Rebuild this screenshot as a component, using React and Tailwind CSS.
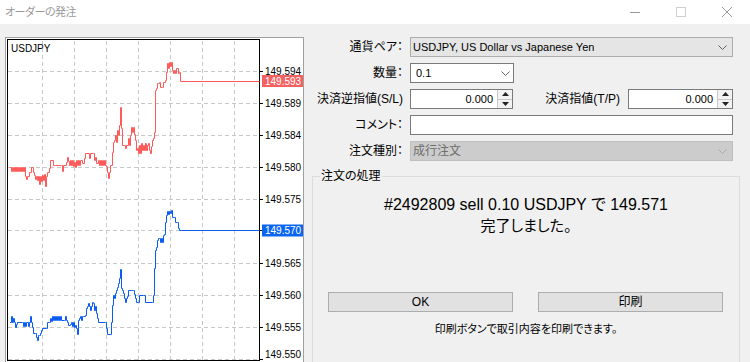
import React from "react";

const red = [[10,167],[11,171],[12,167],[13,171],[14,167],[15,171],[16,167],[17,171],[18,167],[19,171],[20,167],[21,171],[22,167],[23,171],[24,167],[25,176],[26,179],[27,176],[29,172],[31,167],[33,172],[34,175],[35,179],[36,176],[37,180],[38,176],[39,184],[40,176],[41,181],[42,175],[43,180],[44,174],[45,186],[46,176],[47,172],[49,168],[50,160],[53,165],[55,165],[61,165],[62,171],[63,165],[66,162],[67,157],[68,161],[69,165],[70,160],[71,165],[72,160],[73,166],[74,162],[75,167],[76,160],[77,165],[78,160],[79,165],[80,160],[82,163],[84,158],[85,153],[89,158],[90,153],[93,153],[94,160],[95,157],[96,163],[98,160],[99,165],[100,160],[101,165],[102,160],[103,165],[104,160],[105,165],[106,166],[107,172],[108,178],[109,172],[110,165],[112,152],[113,142],[114,140],[115,135],[116,142],[117,130],[118,135],[119,125],[120,107],[121,128],[122,145],[124,145],[125,148],[126,145],[128,138],[129,145],[130,135],[131,127],[132,132],[133,127],[134,134],[135,140],[136,150],[137,148],[138,153],[139,145],[140,153],[141,143],[142,150],[143,145],[144,150],[145,143],[146,150],[147,145],[148,143],[149,150],[150,153],[151,146],[152,140],[153,138],[154,132],[155,90],[156,88],[157,83],[158,83],[159,82],[160,87],[162,87],[163,82],[165,80],[166,72],[167,63],[168,68],[169,62],[170,66],[171,62],[172,70],[173,73],[174,70],[175,73],[176,68],[178,73],[179,72],[180,81],[259,81]];

const blue = [[10,322],[11,316],[12,322],[13,318],[14,322],[15,327],[16,324],[17,322],[22,322],[23,326],[24,322],[25,326],[26,322],[28,326],[29,322],[30,316],[31,322],[32,327],[33,333],[35,333],[36,337],[37,340],[38,335],[39,335],[40,333],[41,330],[42,328],[46,328],[47,322],[49,322],[50,318],[51,321],[52,316],[53,320],[54,316],[55,320],[56,316],[57,320],[58,316],[59,320],[60,316],[61,320],[64,320],[65,316],[66,320],[67,322],[68,325],[70,324],[71,322],[72,326],[73,322],[74,327],[75,325],[76,328],[77,334],[78,320],[79,318],[80,316],[81,320],[82,316],[83,316],[85,315],[86,308],[87,306],[88,303],[89,306],[90,310],[91,306],[92,302],[93,303],[94,310],[95,306],[96,313],[97,318],[98,322],[105,322],[106,328],[107,334],[110,334],[111,322],[112,305],[113,295],[114,298],[115,293],[116,290],[117,287],[118,283],[119,278],[120,269],[121,288],[122,290],[123,293],[124,298],[125,302],[126,298],[127,296],[128,290],[131,290],[133,290],[134,294],[135,298],[136,302],[138,302],[139,295],[143,295],[145,302],[152,302],[153,295],[154,268],[155,250],[156,247],[157,240],[158,238],[159,238],[160,242],[161,238],[162,242],[163,235],[164,234],[165,222],[166,215],[167,211],[168,214],[169,211],[170,213],[171,210],[172,217],[174,217],[175,222],[177,222],[178,228],[179,230],[259,230]];

function stepPath(pts) {
  let d = `M${pts[0][0]} ${pts[0][1] + 0.5}`;
  for (let i = 1; i < pts.length; i++) {
    d += ` H${pts[i][0] + 0.5} V${pts[i][1] + 0.5}`;
  }
  return d;
}

const levels = [
  ["149.594", 71.5],
  ["149.589", 103.5],
  ["149.584", 135.5],
  ["149.580", 167.5],
  ["149.575", 199.5],
  ["149.570", 230.5],
  ["149.565", 263.5],
  ["149.560", 295.5],
  ["149.555", 327.5],
  ["149.550", 359.5],
];
const vgrid = [42.5, 74.5, 106.5, 138.5, 170.5, 202.5, 234.5];

function Chart() {
  return (
    <svg width="297" height="328" viewBox="6 38 297 328">
      <rect x="6" y="38" width="297" height="328" fill="#ffffff" />
      {levels.map(([, y]) =>
        <line key={"h" + y} x1="8" x2="259" y1={y} y2={y} stroke="#c8c8c8" strokeDasharray="4 3" />
      )}
      {vgrid.map((x) =>
        <line key={"v" + x} x1={x} x2={x} y1="41" y2="360" stroke="#c8c8c8" strokeDasharray="4 3" />
      )}
      <rect x="7.5" y="39.5" width="252" height="321" fill="none" stroke="#000" />
      {levels.map(([, y]) =>
        <line key={"t" + y} x1="259" x2="263" y1={y} y2={y} stroke="#000" />
      )}
      <text x="11" y="52" fontSize="10" fontFamily="Liberation Sans, sans-serif" fill="#000">USDJPY</text>
      <path d={stepPath(red)} fill="none" stroke="#ff5b5b" strokeWidth="1" />
      <path d={stepPath(blue)} fill="none" stroke="#0a5cf5" strokeWidth="1" />
      {levels.map(([label, y]) => {
        if (label === "149.570") return null;
        const ty = label === "149.550" ? 358 : y + 3.5;
        return (
          <text key={"l" + label} x="265" y={ty} fontSize="10" fontFamily="Liberation Sans, sans-serif" fill="#000">{label}</text>
        );
      })}
      <rect x="262" y="75" width="41" height="12" fill="#f56161" />
      <text x="265" y="84.5" fontSize="10" fontFamily="Liberation Sans, sans-serif" fill="#fff">149.593</text>
      <rect x="262" y="224.5" width="41" height="12" fill="#0a66f0" />
      <text x="265" y="234" fontSize="10" fontFamily="Liberation Sans, sans-serif" fill="#fff">149.570</text>
    </svg>
  );
}

function Chevron({ color = "#555" }) {
  return (
    <svg width="9" height="5" viewBox="0 0 9 5">
      <path d="M0.5 0.5 L4.5 4.5 L8.5 0.5" fill="none" stroke={color} strokeWidth="1" />
    </svg>
  );
}

function Spinner() {
  return (
    <div className="w-[15px] h-full flex flex-col border-l border-[#c8c8c8] bg-[#f2f2f2]">
      <div className="flex-1 flex items-center justify-center border-b border-[#c8c8c8]">
        <svg width="7" height="4" viewBox="0 0 7 4"><path d="M3.5 0 L7 4 L0 4 Z" fill="#222" /></svg>
      </div>
      <div className="flex-1 flex items-center justify-center">
        <svg width="7" height="4" viewBox="0 0 7 4"><path d="M0 0 L7 0 L3.5 4 Z" fill="#222" /></svg>
      </div>
    </div>
  );
}

function Label({ children, className = "" }) {
  return (
    <div className={"w-[93px] shrink-0 text-right text-[12px] leading-[20px] " + className}>{children}</div>
  );
}

export default function App() {
  return (
    <div className="w-[750px] h-[362px] overflow-hidden bg-[#f0f0f0] flex flex-col font-['Liberation_Sans','Noto_Sans_CJK_JP',sans-serif] text-black [font-feature-settings:'palt']">
      <div className="h-[24px] bg-white flex items-center shrink-0">
        <span className="ml-[5px] text-[11px] tracking-[-0.5px] text-[#9a9a9a]">オーダーの発注</span>
        <div className="ml-auto flex h-full">
          <div className="w-[46px] h-full flex items-center justify-center">
            <svg width="10" height="10" viewBox="0 0 10 10"><line x1="0" x2="10" y1="5.5" y2="5.5" stroke="#9a9a9a" /></svg>
          </div>
          <div className="w-[46px] h-full flex items-center justify-center">
            <svg width="10" height="10" viewBox="0 0 10 10"><rect x="0.5" y="0.5" width="9" height="9" fill="none" stroke="#d0d0d0" /></svg>
          </div>
          <div className="w-[46px] h-full flex items-center justify-center">
            <svg width="10" height="10" viewBox="0 0 10 10"><path d="M0 0 L10 10 M10 0 L0 10" stroke="#9a9a9a" strokeWidth="1" /></svg>
          </div>
        </div>
      </div>
      <div className="flex flex-1 min-h-0">
        <div className="ml-[5px] mt-[13px] w-[299px] h-[330px] shrink-0 border border-[#a0a0a0] bg-white">
          <Chart />
        </div>
        <div className="ml-[6px] mt-[13px] flex flex-col gap-[6px] w-[432px]">
          <div className="flex h-[20px]">
            <Label>通貨ペア：</Label>
            <div className="ml-[7px] w-[323px] h-[20px] bg-[#e5e5e5] border border-[#adadad] flex items-center pl-[2px] text-[11px]">
              <span>USDJPY, US Dollar vs Japanese Yen</span>
              <span className="ml-auto mr-[5px] flex"><Chevron color="#606060" /></span>
            </div>
          </div>
          <div className="flex h-[20px]">
            <Label>数量：</Label>
            <div className="ml-[7px] w-[104px] h-[20px] bg-white border border-[#7a7a7a] flex items-center pl-[5px] text-[11px]">
              <span>0.1</span>
              <span className="ml-auto mr-[3px] flex"><Chevron color="#606060" /></span>
            </div>
          </div>
          <div className="flex h-[20px]">
            <Label>決済逆指値(S/L)</Label>
            <div className="ml-[7px] w-[103px] h-[20px] bg-white border border-[#7a7a7a] flex items-stretch text-[11px]">
              <span className="flex-1 text-right pr-[4px] leading-[18px]">0.000</span>
              <Spinner />
            </div>
            <div className="w-[107px] shrink-0 text-right text-[12px] leading-[20px]">決済指値(T/P)</div>
            <div className="ml-[8px] w-[105px] h-[20px] bg-white border border-[#7a7a7a] flex items-stretch text-[11px]">
              <span className="flex-1 text-right pr-[4px] leading-[18px]">0.000</span>
              <Spinner />
            </div>
          </div>
          <div className="flex h-[20px]">
            <Label>コメント：</Label>
            <div className="ml-[7px] w-[323px] h-[20px] bg-white border border-[#7a7a7a]" />
          </div>
          <div className="flex h-[20px]">
            <Label>注文種別：</Label>
            <div className="ml-[7px] w-[323px] h-[20px] bg-[#cccccc] border border-[#bfbfbf] flex items-center pl-[2px] text-[12px] text-[#6d6d6d]">
              <span>成行注文</span>
              <span className="ml-auto mr-[5px] flex"><Chevron color="#a8a8a8" /></span>
            </div>
          </div>
          <fieldset className="ml-[2px] mt-[1px] w-[428px] h-[220px] shrink-0 border border-[#dcdcdc] p-0">
            <legend className="ml-[7px] px-[1px] text-[12px] leading-[16px]">注文の処理</legend>
            <div className="flex flex-col items-center">
              <div className="mt-[10px] text-[16px] leading-[21px]">#2492809 sell 0.10 USDJPY で 149.571</div>
              <div className="text-[15px] leading-[21px]">完了しました。</div>
              <div className="mt-[56px] w-full flex pl-[15px] gap-[25px]">
                <div className="w-[185px] h-[20px] bg-[#e1e1e1] border border-[#adadad] flex items-center justify-center text-[12px]">OK</div>
                <div className="w-[185px] h-[20px] bg-[#e1e1e1] border border-[#adadad] flex items-center justify-center text-[12px]">印刷</div>
              </div>
              <div className="mt-[10px] text-[11px] leading-[14px]">印刷ボタンで取引内容を印刷できます。</div>
            </div>
          </fieldset>
        </div>
      </div>
    </div>
  );
}
